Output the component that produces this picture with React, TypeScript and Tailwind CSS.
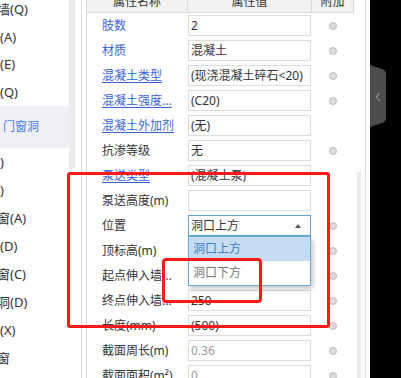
import React from 'react';

type Row = {
  name: string;
  blue?: boolean;
  ul?: boolean;
  value?: string;
  gray?: boolean;
  radio?: boolean;
  select?: boolean;
};

const rows: Row[] = [
  { name: '肢数', blue: true, value: '2', radio: true },
  { name: '材质', blue: true, value: '混凝土', radio: true },
  { name: '混凝土类型', blue: true, ul: true, value: '(现浇混凝土碎石<20)', radio: true },
  { name: '混凝土强度...', blue: true, ul: true, value: '(C20)', radio: true },
  { name: '混凝土外加剂', blue: true, ul: true, value: '(无)' },
  { name: '抗渗等级', value: '无', radio: true },
  { name: '泵送类型', blue: true, ul: true, value: '(混凝土泵)' },
  { name: '泵送高度(m)', value: '' },
  { name: '位置', select: true, value: '洞口上方', radio: true },
  { name: '顶标高(m)', value: '', radio: true },
  { name: '起点伸入墙...', value: '', radio: true },
  { name: '终点伸入墙...', value: '250', radio: true },
  { name: '长度(mm)', value: '(500)', radio: true },
  { name: '截面周长(m)', value: '0.36', gray: true, radio: true },
  { name: '截面面积(m²)', value: '0', gray: true, radio: true },
];

const topItems: { t: string; cut?: boolean }[] = [
  { t: '墙(Q)', cut: true },
  { t: '(A)' },
  { t: '(E)' },
  { t: '(Q)' },
];

const bottomItems: { t: string; cut?: boolean }[] = [
  { t: ')' },
  { t: ')' },
  { t: '窗(A)', cut: true },
  { t: '(D)' },
  { t: '窗(C)', cut: true },
  { t: '洞(D)', cut: true },
  { t: '(X)' },
  { t: '窗', cut: true },
];

function Radio() {
  return <span className="block w-[8px] h-[8px] rounded-full bg-[#dcdcdc] border border-[#bcbcbc]" />;
}

export default function App() {
  return (
    <div className="relative w-[401px] h-[378px] overflow-hidden bg-white flex text-[#333] font-[family-name:'Noto_Sans','Noto_Sans_CJK_SC',sans-serif]">
      {/* sidebar */}
      <div className="w-[69px] shrink-0 flex flex-col text-[13px] leading-none overflow-hidden">
        {topItems.map((it, i) => (
          <div key={i} className={`h-[27.5px] shrink-0 flex items-center whitespace-nowrap ${i === 0 ? '-mt-[4px]' : ''}`}>
            <span className={it.cut ? '-ml-[3px]' : ''}>{it.t}</span>
          </div>
        ))}
        <div className="h-[42px] shrink-0 flex items-center bg-[#eef0f5] pl-[3px] text-[12px] text-[#4a7fe0] whitespace-nowrap">
          门窗洞
        </div>
        {bottomItems.map((it, i) => (
          <div key={i} className="h-[28px] shrink-0 flex items-center whitespace-nowrap">
            <span className={it.cut ? '-ml-[3px]' : ''}>{it.t}</span>
          </div>
        ))}
      </div>

      {/* sidebar scrollbar */}
      <div className="w-[6px] shrink-0">
        <div className="h-[168px] bg-[#ececec]" />
      </div>
      <div className="w-[6px] shrink-0" />
      <div className="w-[1px] shrink-0 bg-[#dedede]" />
      <div className="w-[4px] shrink-0" />

      {/* property table */}
      <div className="w-[268px] shrink-0 border-l border-[#d9d9d9] -mt-[9px] flex flex-col text-[12px] leading-none">
        <div className="h-[22px] shrink-0 flex bg-[#f2f2f2] border-b border-r border-[#d9d9d9]">
          <div className="w-[101px] border-r border-[#d9d9d9] flex items-center justify-center">属性名称</div>
          <div className="w-[124px] border-r border-[#d9d9d9] flex items-center justify-center">属性值</div>
          <div className="flex-1 flex items-center justify-center">附加</div>
        </div>
        {rows.map((r, i) => (
          <div key={i} className="h-[25px] shrink-0 flex items-center">
            <div className="w-[101px] pl-[15px] whitespace-nowrap">
              <span className={`${r.blue ? 'text-[#3a62d8]' : 'text-[#333]'} ${r.ul ? 'underline underline-offset-2' : ''}`}>
                {r.name}
              </span>
            </div>
            <div className="w-[124px] flex">
              {r.select ? (
                <div className="relative w-[123px] h-[21px] border border-[#5ea6d4] bg-white pl-[2px] flex items-center">
                  <span>{r.value}</span>
                  <svg className="ml-auto mr-[9px]" width="6" height="4" viewBox="0 0 6 4">
                    <polygon points="3,0 6,4 0,4" fill="#555" />
                  </svg>
                  <div className="absolute left-[-1px] top-[20px] w-[123px] z-10 border border-[#6aaad6] bg-white shadow-[2px_3px_5px_rgba(0,0,0,0.22)] flex flex-col">
                    <div className="h-[24px] flex items-center pl-[4px] bg-[#c5dcf1] text-[#3b82c4]">洞口上方</div>
                    <div className="h-[24px] flex items-center pl-[4px] text-[#777]">洞口下方</div>
                  </div>
                </div>
              ) : (
                <div className={`w-[123px] h-[21px] border border-[#dcdcdc] pl-[2px] flex items-center whitespace-nowrap ${r.gray ? 'text-[#999]' : 'text-[#333]'}`}>
                  {r.value}
                </div>
              )}
            </div>
            <div className="flex-1 flex justify-center">{r.radio ? <Radio /> : null}</div>
          </div>
        ))}
      </div>

      {/* right scroll area */}
      <div className="w-[3px] shrink-0" />
      <div className="w-[4px] shrink-0 flex flex-col">
        <div className="mt-[172px] flex-1 bg-[#ebebeb]" />
      </div>
      <div className="w-[4px] shrink-0" />
      <div className="w-[1px] shrink-0 bg-[#dcdcdc]" />
      <div className="w-[4px] shrink-0" />

      {/* dark area */}
      <div className="flex-1 bg-black relative">
        <svg className="absolute left-0 top-[65px]" width="16" height="62" viewBox="0 0 16 62">
          <path d="M0 0 L12 4 Q16 5.5 16 9 L16 53 Q16 56.5 12 58 L0 62 Z" fill="#4d4d4d" />
          <path d="M9.5 28 L6.5 32 L9.5 36" stroke="#a8a8a8" strokeWidth="1" fill="none" />
        </svg>
      </div>

      {/* red annotations */}
      <div className="absolute left-[67px] top-[172px] w-[263px] h-[156px] border-[3px] border-[#ff1a1a] rounded-[3px] pointer-events-none" />
      <div className="absolute left-[162px] top-[258px] w-[100px] h-[45px] border-[3px] border-[#ff1a1a] rounded-[4px] pointer-events-none z-20" />
    </div>
  );
}
